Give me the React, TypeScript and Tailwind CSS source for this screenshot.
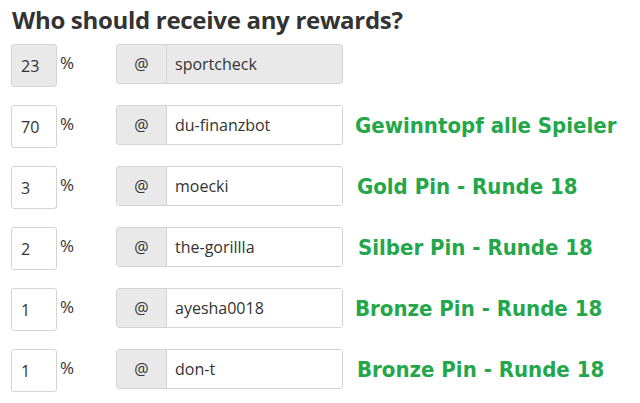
import React from "react";

const rows = [
  { pct: "23", user: "sportcheck", label: "", disabled: true, ml: "ml-[12px]" },
  { pct: "70", user: "du-finanzbot", label: "Gewinntopf alle Spieler", disabled: false, ml: "ml-[12px]" },
  { pct: "3", user: "moecki", label: "Gold Pin - Runde 18", disabled: false, ml: "ml-[14px]" },
  { pct: "2", user: "the-gorillla", label: "Silber Pin - Runde 18", disabled: false, ml: "ml-[15px]" },
  { pct: "1", user: "ayesha0018", label: "Bronze Pin - Runde 18", disabled: false, ml: "ml-[12px]" },
  { pct: "1", user: "don-t", label: "Bronze Pin - Runde 18", disabled: false, ml: "ml-[14px]" },
];

export default function App() {
  return (
    <div className="w-[640px] h-[403px] bg-white overflow-hidden pl-[11px] text-[#333]" style={{ fontFamily: "'Open Sans', sans-serif" }}>
      <h1 className="text-[24px] font-bold leading-[30px] pt-[5px] pl-[1px] text-[#333] tracking-[-0.3px]">
        Who should receive any rewards?
      </h1>
      <div className="mt-[9px] flex flex-col gap-[18px]">
        {rows.map((r, i) => (
          <div key={i} className="flex items-center h-[43px]">
            <div
              className={`w-[46px] h-[43px] border border-[#d4d4d4] rounded-[3px] flex items-center pl-[9px] text-[16px] ${
                r.disabled ? "bg-[#e9e9e9]" : "bg-white"
              }`}
            >
              {r.pct}
            </div>
            <div className="self-start mt-[10px] ml-[3px] w-[56px] text-[17px] leading-[18px]">%</div>
            <div className="flex h-[40px] w-[227px] self-start rounded-[3px] border border-[#d4d4d4] overflow-hidden">
              <div className="w-[50px] bg-[#e9e9e9] border-r border-[#d4d4d4] flex items-center justify-center text-[16px]">
                @
              </div>
              <div
                className={`flex-1 flex items-center pl-[8px] text-[16px] ${r.disabled ? "bg-[#e9e9e9]" : "bg-white"}`}
              >
                {r.user}
              </div>
            </div>
            {r.label && (
              <div
                className={`${r.ml} text-[22px] font-bold text-[#23a74a] leading-[24px] -mt-[2px]`}
                style={{ fontFamily: "'DejaVu Sans Condensed', 'DejaVu Sans', Verdana, sans-serif", fontStretch: "condensed" }}
              >
                {r.label}
              </div>
            )}
          </div>
        ))}
      </div>
    </div>
  );
}
